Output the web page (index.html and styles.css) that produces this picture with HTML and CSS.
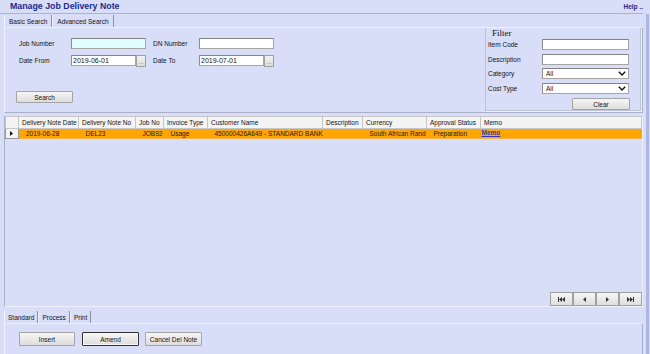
FILE: index.html
```html
<!DOCTYPE html>
<html lang="en">
<head>
    <meta charset="UTF-8">
    <title>Manage Job Delivery Note</title>
    <link rel="stylesheet" href="styles.css">
</head>
<body>
<div class="app">
    <div class="main">

        <!-- title -->
        <header class="title-bar">
            <h1>Manage Job Delivery Note</h1>
            <a href="#" class="help">Help ..</a>
        </header>

        <!-- search tabs -->
        <div class="tabs top-tabs">
            <span class="tab active">Basic Search</span>
            <span class="tab">Advanced Search</span>
        </div>

        <!-- search panel -->
        <section class="search-panel">
            <div class="search-form">
                <div class="form-grid">
                    <label>Job Number</label>
                    <input class="field field-focus" type="text">
                    <label class="second">DN Number</label>
                    <input class="field" type="text">

                    <label>Date From</label>
                    <div class="date-field">
                        <input class="field" type="text" value="2019-06-01">
                        <span class="dots">...</span>
                    </div>
                    <label class="second">Date To</label>
                    <div class="date-field">
                        <input class="field" type="text" value="2019-07-01">
                        <span class="dots">...</span>
                    </div>
                </div>
                <button class="btn search-btn">Search</button>
            </div>

            <div class="filter">
                <div class="filter-title">Filter</div>
                <div class="filter-grid">
                    <label>Item Code</label>
                    <input class="field" type="text">
                    <label>Description</label>
                    <input class="field" type="text">
                    <label>Category</label>
                    <div class="field select">All
                        <svg width="8" height="5" viewBox="0 0 8 5"><polyline points="0.8,0.8 4,4 7.2,0.8" fill="none" stroke="#111" stroke-width="1.4"/></svg>
                    </div>
                    <label>Cost Type</label>
                    <div class="field select">All
                        <svg width="8" height="5" viewBox="0 0 8 5"><polyline points="0.8,0.8 4,4 7.2,0.8" fill="none" stroke="#111" stroke-width="1.4"/></svg>
                    </div>
                </div>
                <button class="btn clear-btn">Clear</button>
            </div>
        </section>

        <!-- result grid -->
        <section class="grid-box">
            <table class="grid">
                <colgroup>
                    <col style="width:13px"><col style="width:60px"><col style="width:57px"><col style="width:28px">
                    <col style="width:44px"><col style="width:115px"><col style="width:40px"><col style="width:64px">
                    <col style="width:54px"><col>
                </colgroup>
                <thead>
                    <tr>
                        <th class="corner"></th>
                        <th>Delivery Note Date</th>
                        <th>Delivery Note No</th>
                        <th>Job No</th>
                        <th>Invoice Type</th>
                        <th>Customer Name</th>
                        <th>Description</th>
                        <th>Currency</th>
                        <th>Approval Status</th>
                        <th>Memo</th>
                    </tr>
                </thead>
                <tbody>
                    <tr class="selected">
                        <td class="row-head"><svg width="3" height="5" viewBox="0 0 3 5"><polygon points="0,0 3,2.5 0,5" fill="#111"/></svg></td>
                        <td>2019-06-28</td>
                        <td>DEL23</td>
                        <td>JOB92</td>
                        <td>Usage</td>
                        <td>450000426A649 - STANDARD BANK</td>
                        <td></td>
                        <td>South African Rand</td>
                        <td>Preparation</td>
                        <td class="memo"><a href="#">Memo</a></td>
                    </tr>
                </tbody>
            </table>

            <div class="pager">
                <button class="page-btn"><svg width="7" height="5" viewBox="0 0 7 5"><rect x="0" y="0" width="1" height="5"/><polygon points="4,0 1,2.5 4,5"/><polygon points="7,0 4,2.5 7,5"/></svg></button>
                <button class="page-btn"><svg width="3" height="5" viewBox="0 0 3 5"><polygon points="3,0 0,2.5 3,5"/></svg></button>
                <button class="page-btn"><svg width="3" height="5" viewBox="0 0 3 5"><polygon points="0,0 3,2.5 0,5"/></svg></button>
                <button class="page-btn"><svg width="7" height="5" viewBox="0 0 7 5"><polygon points="0,0 3,2.5 0,5"/><polygon points="3,0 6,2.5 3,5"/><rect x="6" y="0" width="1" height="5"/></svg></button>
            </div>
        </section>

        <!-- action tabs -->
        <div class="tabs bottom-tabs">
            <span class="tab active">Standard</span>
            <span class="tab">Process</span>
            <span class="tab">Print</span>
        </div>

        <section class="action-panel">
            <button class="btn action-btn">Insert</button>
            <button class="btn action-btn amend">Amend</button>
            <button class="btn action-btn">Cancel Del Note</button>
        </section>
    </div>
    <div class="edge"></div>
</div>
</body>
</html>
```

FILE: styles.css
```css
/* base */
* {
    box-sizing: border-box;
}

body {
    margin: 0;
    background: #d8def8;
    font-family: "Liberation Sans", Arial, sans-serif;
    font-size: 6.5px;
    color: #111;
    overflow: hidden;
}

.app {
    display: flex;
    height: 354px;
}

.main {
    width: 643px;
    display: flex;
    flex-direction: column;
}

.edge {
    width: 3px;
    margin-left: 3px;
    margin-top: 14px;
    background: #aeb7e2;
}

/* title */
.title-bar {
    height: 14px;
    display: flex;
    justify-content: space-between;
    padding-left: 10px;
    border-bottom: 1px solid #aeb2c6;
}

.title-bar h1 {
    margin: 0;
    font-size: 8.8px;
    line-height: 13px;
    color: #1b2a8e;
}

.help {
    font-weight: bold;
    color: #1b2a8e;
    text-decoration: none;
    line-height: 13px;
}

/* tabs */
.tabs {
    display: flex;
    align-items: flex-end;
    padding-left: 4px;
}

.top-tabs {
    height: 13px;
}

.bottom-tabs {
    height: 16px;
}

.tab {
    height: 12px;
    line-height: 14px;
    padding: 0 4px;
    border-left: 1px solid #f2f4fe;
    border-right: 1px solid #8a8fa6;
    white-space: nowrap;
}

.bottom-tabs .tab {
    padding: 0 3px;
    line-height: 13px;
}

/* search panel */
.search-panel {
    height: 86px;
    margin-left: 4px;
    display: flex;
    border-top: 1px solid #eef1fd;
    border-left: 1px solid #eef1fd;
    border-right: 1px solid #aab0c8;
    border-bottom: 1px solid #aab0c8;
}

.search-form {
    padding: 10px 0 0 14px;
}

.form-grid {
    display: grid;
    grid-template-columns: 52px 75px 53px 75px;
    grid-template-rows: 11px 11px;
    row-gap: 6px;
}

.form-grid label,
.filter-grid label {
    align-self: center;
    white-space: nowrap;
}

.form-grid .second {
    padding-left: 7px;
}

.field {
    width: 100%;
    height: 11px;
    margin: 0;
    padding: 0 0 0 1px;
    border: 1px solid #a6a6a6;
    border-top-color: #838383;
    border-left-color: #8f8f8f;
    background: #fff;
    font: 7px "Liberation Sans", Arial, sans-serif;
    color: #111;
    outline: none;
}

.field-focus {
    background: #e0ffff;
}

.date-field {
    display: flex;
}

.date-field .field {
    width: 65px;
}

.dots {
    width: 10px;
    height: 12px;
    margin-top: -0.5px;
    border: 1px solid #a0a0a0;
    background: linear-gradient(#f2f2f2, #dcdcdc);
    color: #666;
    font-size: 6px;
    line-height: 12px;
    text-align: center;
}

.btn {
    margin: 0;
    padding: 0;
    border: 1px solid #a4a4a4;
    border-radius: 1px;
    background: linear-gradient(#f6f6f6, #dddddd);
    font: 6.5px "Liberation Sans", Arial, sans-serif;
    color: #111;
}

.search-btn {
    display: block;
    width: 57px;
    height: 12px;
    margin: 25px 0 0 -3px;
}

/* filter */
.filter {
    width: 156px;
    height: 83px;
    margin-left: auto;
    margin-right: 1px;
    padding-left: 2px;
    border: 1px solid #bcc2d8;
    border-top: none;
    box-shadow: 1px 1px 0 #eef1fd;
    display: flex;
    flex-direction: column;
}

.filter-title {
    height: 11px;
    padding-left: 4px;
    font-family: "Liberation Serif", "Times New Roman", serif;
    font-size: 9px;
    line-height: 10px;
}

.filter-grid {
    display: grid;
    grid-template-columns: 54px 87px;
    grid-auto-rows: 11px;
    row-gap: 3.5px;
}

.select {
    display: flex;
    align-items: center;
    justify-content: space-between;
    padding: 0 2px 0 3px;
    font-size: 6.5px;
}

.clear-btn {
    width: 58px;
    height: 12px;
    margin: 4.5px 0 0 84px;
}

/* result grid */
.grid-box {
    height: 191px;
    margin: 3px 0 0 4px;
    display: flex;
    flex-direction: column;
    border-left: 1px solid #aab0c8;
    border-right: 1px solid #eef1fd;
    border-bottom: 1px solid #eef1fd;
}

.grid {
    width: 100%;
    table-layout: fixed;
    border-collapse: collapse;
}

.grid th {
    height: 12px;
    padding: 0 0 0 3px;
    background: #f4f4f4;
    border: 1px solid #c6c6c6;
    font-weight: normal;
    text-align: left;
    white-space: nowrap;
    overflow: hidden;
}

.grid td {
    height: 10px;
    padding: 0 0 0 7px;
    background: #ffa500;
    border-bottom: 1px solid #f2b44a;
    white-space: nowrap;
    overflow: hidden;
    color: #1a1a1a;
}

.grid td.row-head {
    padding: 0 0 0 4px;
    background: #f4f4f4;
    border: 1px solid #9a9a9a;
}

.grid td.memo {
    padding-left: 1px;
    vertical-align: top;
    line-height: 7px;
}

.memo a {
    color: #3434c4;
    font-weight: bold;
}

.pager {
    margin-top: auto;
    display: flex;
    justify-content: flex-end;
}

.page-btn {
    width: 23px;
    height: 14px;
    margin: 0;
    padding: 0;
    border: 1px solid #a0a0a0;
    background: linear-gradient(#f6f6f6, #dedede);
    display: flex;
    align-items: center;
    justify-content: center;
}

.page-btn svg {
    fill: #333;
}

/* action panel */
.action-panel {
    flex: 1;
    margin-left: 4px;
    padding: 8px 0 0 14px;
    display: flex;
    align-items: flex-start;
    border-top: 1px solid #eef1fd;
    border-left: 1px solid #eef1fd;
    border-right: 1px solid #aab0c8;
}

.action-btn {
    width: 57px;
    height: 14px;
    margin-right: 6px;
}

.action-btn:first-child {
    width: 56px;
    margin-right: 7px;
}

.amend {
    border: 1px solid #333;
    box-shadow: inset 0 0 0 1px #f4f4f4;
}
```
